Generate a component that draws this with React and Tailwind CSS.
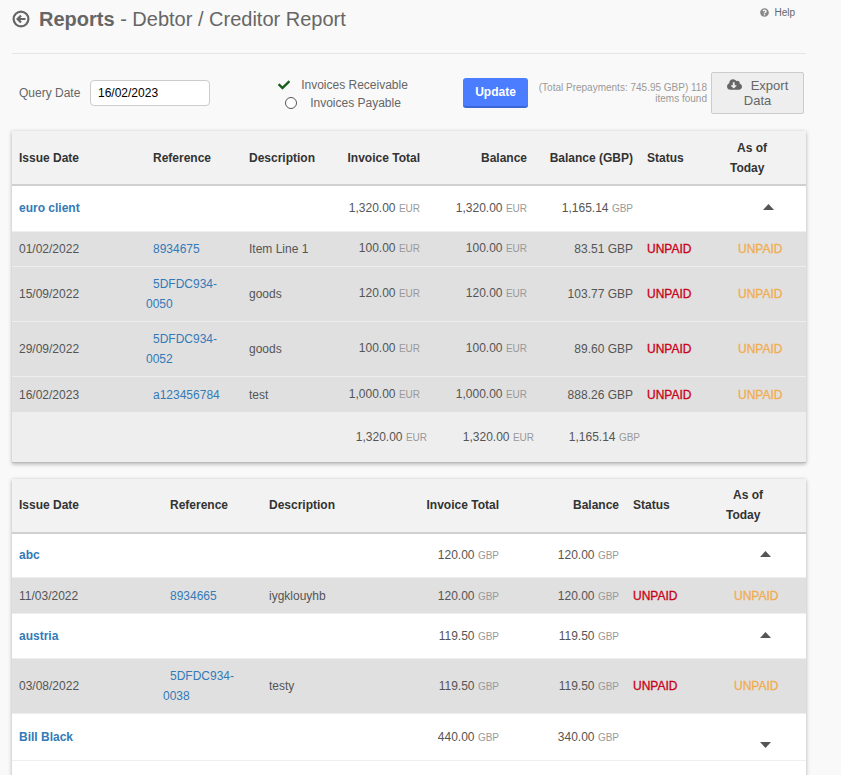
import React from "react";
import { FaQuestionCircle, FaCloudDownloadAlt, FaCheck } from "react-icons/fa";

function BackIcon() {
  return (
    <svg width="18" height="18" viewBox="0 0 18 18" fill="none" stroke="#666" className="shrink-0">
      <circle cx="9" cy="9" r="7.4" strokeWidth="2.2" />
      <path d="M13.5 9H6.5M9 5.6 5.6 9 9 12.4" strokeWidth="2.2" />
    </svg>
  );
}

function Caret({ down }) {
  return (
    <svg width="11" height="6" viewBox="0 0 11 6" fill="#555" className="block -mt-[2px]">
      <path d={down ? "M0 0h11L5.5 6z" : "M0 6h11L5.5 0z"} />
    </svg>
  );
}

function Amount({ value, unit, className }) {
  return (
    <span className={className}>
      {value} <span className="text-[10px] text-[#999]">{unit}</span>
    </span>
  );
}

function HeaderRow({ cols }) {
  return (
    <tr className="h-[54px] bg-[#f2f2f2] border-b-2 border-[#d0d0d0] text-[#333] font-bold">
      {cols.map((c, i) => (
        <th key={i} className={c.cls + " font-bold"}>
          {c.label}
        </th>
      ))}
    </tr>
  );
}

function AsOf() {
  return (
    <>
      <span className="pl-[7px]">As of</span>
      <br />
      Today
    </>
  );
}

function Status() {
  return (
    <>
      <td className="pl-[7px] text-[#c9001a] [-webkit-text-stroke:0.3px]">UNPAID</td>
      <td className="pl-[8px] text-[#f0ad4e] [-webkit-text-stroke:0.3px]">UNPAID</td>
    </>
  );
}

function Ref({ text }) {
  return <span className="block indent-[7px] text-[#337ab7]">{text}</span>;
}

const firstCols = [
  { label: "Issue Date", cls: "pl-[7px] text-left" },
  { label: "Reference", cls: "pl-[7px] text-left" },
  { label: "Description", cls: "pl-[7px] text-left" },
  { label: "Invoice Total", cls: "pr-[7px] text-right" },
  { label: "Balance", cls: "pr-[7px] text-right" },
  { label: "Balance (GBP)", cls: "pr-[7px] text-right" },
  { label: "Status", cls: "pl-[7px] text-left" },
  { label: <AsOf />, cls: "text-left" },
];

const firstRows = [
  ["01/02/2022", "8934675", "Item Line 1", "100.00", "100.00", "83.51", "h-[35px]"],
  ["15/09/2022", "5DFDC934-0050", "goods", "120.00", "120.00", "103.77", "h-[55px]"],
  ["29/09/2022", "5DFDC934-0052", "goods", "100.00", "100.00", "89.60", "h-[55px]"],
  ["16/02/2023", "a123456784", "test", "1,000.00", "1,000.00", "888.26", "h-[36px] [&>td]:pt-[1px]"],
];

function FirstTable() {
  return (
    <table className="w-full table-fixed border-collapse text-xs leading-5 shadow-[0_1px_4px_rgba(0,0,0,0.3)]">
      <colgroup>
        <col className="w-[134px]" />
        <col className="w-[96px]" />
        <col className="w-[83px]" />
        <col className="w-[102px]" />
        <col className="w-[107px]" />
        <col className="w-[106px]" />
        <col className="w-[90px]" />
        <col />
      </colgroup>
      <thead>
        <HeaderRow cols={firstCols} />
      </thead>
      <tbody className="text-[#555]">
        <tr className="h-[46px] bg-white border-b border-[#eee]">
          <td className="pl-[7px] font-bold text-[#337ab7]">euro client</td>
          <td />
          <td />
          <td className="pr-[7px] text-right"><Amount value="1,320.00" unit="EUR" /></td>
          <td className="pr-[7px] text-right"><Amount value="1,320.00" unit="EUR" /></td>
          <td className="pr-[7px] text-right"><Amount value="1,165.14" unit="GBP" /></td>
          <td />
          <td className="pl-[33px]"><Caret /></td>
        </tr>
        {firstRows.map((r) => (
          <tr key={r[0]} className={r[6] + " bg-[#e0e0e0] border-b border-[#eee] last:border-b-0"}>
            <td className="pl-[7px]">{r[0]}</td>
            <td className="pr-2"><Ref text={r[1]} /></td>
            <td className="pl-[7px]">{r[2]}</td>
            <td className="pr-[7px] text-right"><Amount value={r[3]} unit="EUR" /></td>
            <td className="pr-[7px] text-right"><Amount value={r[4]} unit="EUR" /></td>
            <td className="pr-[7px] text-right">{r[5]} GBP</td>
            <Status />
          </tr>
        ))}
        <tr className="h-[50px] bg-[#eee] border-b border-[#bbb]">
          <td />
          <td />
          <td />
          <td className="text-right"><Amount value="1,320.00" unit="EUR" /></td>
          <td className="text-right"><Amount value="1,320.00" unit="EUR" /></td>
          <td className="text-right"><Amount value="1,165.14" unit="GBP" /></td>
          <td />
          <td />
        </tr>
      </tbody>
    </table>
  );
}

const secondCols = [
  { label: "Issue Date", cls: "pl-[7px] text-left" },
  { label: "Reference", cls: "pl-[7px] text-left" },
  { label: "Description", cls: "pl-[6px] text-left" },
  { label: "Invoice Total", cls: "pr-[7px] text-right" },
  { label: "Balance", cls: "pr-[7px] text-right" },
  { label: "Status", cls: "pl-[7px] text-left" },
  { label: <AsOf />, cls: "text-left" },
];

function ClientRow({ name, total, balance, down, height }) {
  return (
    <tr className={height + " bg-white border-b border-[#eee]"}>
      <td className="pl-[7px] font-bold text-[#337ab7]">{name}</td>
      <td />
      <td />
      <td className="pr-[7px] text-right"><Amount value={total} unit="GBP" /></td>
      <td className="pr-[7px] text-right"><Amount value={balance} unit="GBP" /></td>
      <td />
      <td className="pl-[34px]">
        <span className={down ? "block pt-[18px]" : "block"}><Caret down={down} /></span>
      </td>
    </tr>
  );
}

function InvoiceRow({ date, reference, desc, amount, height }) {
  return (
    <tr className={height + " bg-[#e0e0e0] border-b border-[#eee]"}>
      <td className="pl-[7px]">{date}</td>
      <td className="pr-2"><Ref text={reference} /></td>
      <td className="pl-[6px]">{desc}</td>
      <td className="pr-[7px] text-right"><Amount value={amount} unit="GBP" /></td>
      <td className="pr-[7px] text-right"><Amount value={amount} unit="GBP" /></td>
      <Status />
    </tr>
  );
}

function SecondTable() {
  return (
    <table className="w-full table-fixed border-collapse text-xs leading-5 shadow-[0_1px_4px_rgba(0,0,0,0.3)]">
      <colgroup>
        <col className="w-[151px]" />
        <col className="w-[100px]" />
        <col className="w-[115px]" />
        <col className="w-[128px]" />
        <col className="w-[120px]" />
        <col className="w-[100px]" />
        <col />
      </colgroup>
      <thead>
        <HeaderRow cols={secondCols} />
      </thead>
      <tbody className="text-[#555]">
        <ClientRow name="abc" total="120.00" balance="120.00" height="h-[45px]" />
        <InvoiceRow date="11/03/2022" reference="8934665" desc="iygklouyhb" amount="120.00" height="h-[36px] [&>td]:pt-[1px]" />
        <ClientRow name="austria" total="119.50" balance="119.50" height="h-[45px]" />
        <InvoiceRow date="03/08/2022" reference="5DFDC934-0038" desc="testy" amount="119.50" height="h-[55px]" />
        <ClientRow name="Bill Black" total="440.00" balance="340.00" down height="h-[47px]" />
        <tr className="h-[20px] bg-white">
          <td colSpan={7} />
        </tr>
      </tbody>
    </table>
  );
}

export default function App() {
  return (
    <div className="h-[775px] overflow-hidden bg-[#f9f9f9] font-['Liberation_Sans',Arial,sans-serif] text-xs text-[#666]">
      <div className="w-[794px] ml-3">
        <div className="flex items-start justify-between h-[54px] border-b border-[#e5e5e5]">
          <h1 className="flex items-center gap-[9px] h-[38px] text-xl text-[#666]">
            <BackIcon />
            <span>
              <b>Reports</b> - Debtor / Creditor Report
            </span>
          </h1>
          <a className="flex items-center gap-[5px] mt-[6px] mr-[11px] text-[10px] text-[#666]">
            <FaQuestionCircle className="text-[9px] text-[#888]" />
            Help
          </a>
        </div>

        <div className="flex items-center h-[77px]">
          <label className="ml-[7px] w-[71px]">Query Date</label>
          <input
            readOnly
            value="16/02/2023"
            className="w-[120px] h-[26px] px-[7px] bg-white border border-[#ccc] rounded text-xs text-black font-['Liberation_Sans',Arial,sans-serif]"
          />
          <div className="flex flex-col items-center w-[160px] ml-[53px] mt-[3px] leading-[18px]">
            <div className="flex items-center gap-[11px]">
              <FaCheck className="text-[12px] text-[#1b5e20]" />
              Invoices Receivable
            </div>
            <div className="flex items-center gap-[13px]">
              <span className="w-[12px] h-[12px] rounded-full border border-[#555] bg-white" />
              Invoices Payable
            </div>
          </div>
          <button className="ml-[40px] w-[65px] h-[30px] rounded-[3px] bg-[#4a7dff] border-b-2 border-[#3b66d6] text-xs font-bold text-white">
            Update
          </button>
          <div className="w-[170px] ml-[9px] text-[10px] leading-[11px] text-right text-[#999]">
            (Total Prepayments: 745.95 GBP) 118 items found
          </div>
          <button className="ml-[4px] w-[93px] h-[42px] bg-[#eee] border border-[#ccc] rounded-[2px] text-[13px] leading-[15px] text-[#666]">
            <FaCloudDownloadAlt className="inline text-[15px] mr-[9px] align-[-2px]" />
            Export
            <br />
            Data
          </button>
        </div>

        <FirstTable />
        <div className="h-[16px]" />
        <SecondTable />
      </div>
    </div>
  );
}
